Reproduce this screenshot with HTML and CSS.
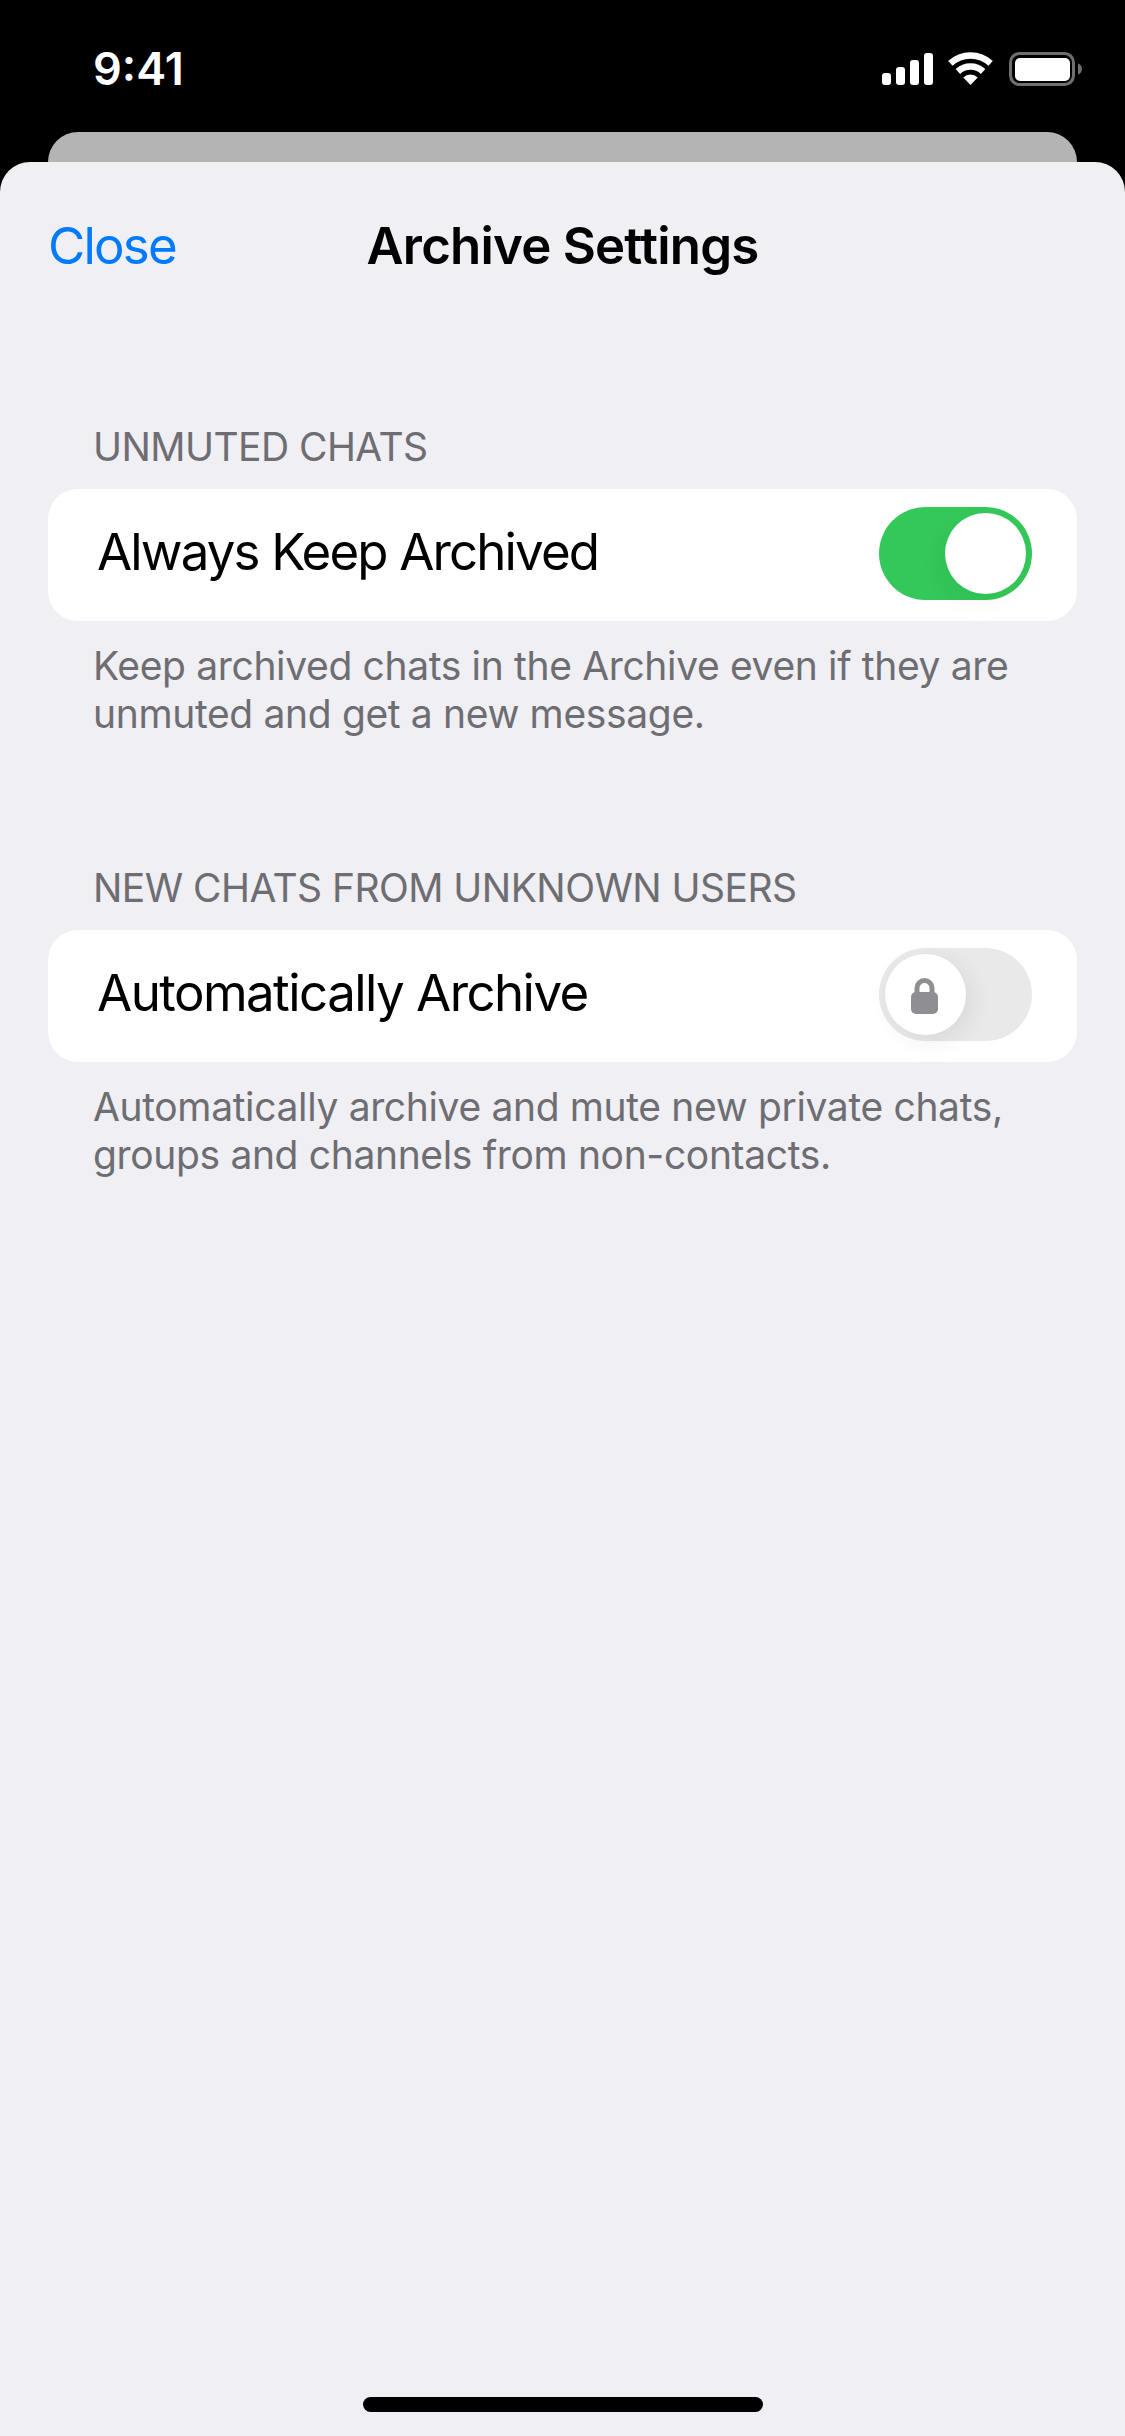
FILE: index.html
```html
<!DOCTYPE html>
<html lang="en">
<head>
<meta charset="utf-8">
<title>Archive Settings</title>
<link rel="stylesheet" href="styles.css">
</head>
<body>
<div class="screen">
  <header class="status">
    <span class="time">9:41</span>
    <div class="status-icons">
      <svg class="signal" viewBox="0 0 51 32"><rect x="0" y="20" width="9" height="12" rx="3"/><rect x="14" y="14" width="9" height="18" rx="3"/><rect x="28" y="7" width="9" height="25" rx="3"/><rect x="42" y="0" width="9" height="32" rx="3"/></svg>
      <svg class="wifi" viewBox="0 0 45 33"><path class="arc" d="M2.4 11.4A29.5 29.5 0 0 1 42.6 11.4"/><path class="arc" d="M9.9 19.5A18.5 18.5 0 0 1 35.1 19.5"/><path class="wedge" d="M22.5 33L15.3 25.6A10.2 10.2 0 0 1 29.7 25.6Z"/></svg>
      <svg class="battery" viewBox="0 0 73 34"><rect class="batt-frame" x="1.5" y="1.5" width="63" height="31" rx="9"/><rect class="batt-fill" x="6" y="6" width="55" height="23" rx="5"/><path class="batt-tip" d="M69 11.5c2.4.8 4 3 4 5.500s-1.600 4.700-4 5.500z"/></svg>
    </div>
  </header>
  <div class="back-card"></div>
  <main class="sheet">
    <nav class="nav">
      <span class="close">Close</span>
      <span class="title">Archive Settings</span>
    </nav>
    <section class="group">
      <h2 class="group-head">UNMUTED CHATS</h2>
      <div class="row">
        <span class="row-label">Always Keep Archived</span>
        <span class="toggle on"><span class="knob"></span></span>
      </div>
      <p class="group-foot">Keep archived chats in the Archive even if they are<br>unmuted and get a new message.</p>
    </section>
    <section class="group">
      <h2 class="group-head">NEW CHATS FROM UNKNOWN USERS</h2>
      <div class="row">
        <span class="row-label row-label-loose">Automatically Archive</span>
        <span class="toggle off"><span class="knob">
          <svg class="lock" viewBox="0 0 27 36"><path class="shackle" d="M6 17V10a7.500 7.500 0 0 1 15 0V17"/><rect class="lock-body" x="0" y="14" width="27" height="22" rx="5"/></svg>
        </span></span>
      </div>
      <p class="group-foot">Automatically archive and mute new private chats,<br>groups and channels from non-contacts.</p>
    </section>
    <div class="home-bar"></div>
  </main>
</div>
</body>
</html>
```
FILE: styles.css
```css
* { box-sizing: border-box; }
html, body { margin: 0; padding: 0; background: #000; }
body { font-family: Inter, "Liberation Sans", sans-serif; }
.screen { width: 1125px; height: 2436px; display: flex; flex-direction: column; overflow: hidden; background: #000; }

.status { height: 132px; flex: none; display: flex; justify-content: space-between; align-items: flex-start; padding: 52px 43px 0 93px; color: #fff; }
.time { font-size: 45px; line-height: 34px; font-weight: 600; }
.status-icons { display: flex; align-items: flex-start; }
.signal { width: 51px; height: 32px; margin-top: 1px; fill: #fff; }
.wifi { width: 45px; height: 33px; margin-left: 15px; }
.arc { fill: none; stroke: #fff; stroke-width: 6.5; }
.wedge { fill: #fff; }
.battery { width: 73px; height: 34px; margin-left: 16px; }
.batt-frame { fill: none; stroke: #6f6f6f; stroke-width: 3; }
.batt-fill { fill: #fff; }
.batt-tip { fill: #6f6f6f; }

.back-card { height: 30px; flex: none; margin: 0 48px; background: #b4b4b4; border-radius: 30px 30px 0 0; }

.sheet { flex: 1; display: flex; flex-direction: column; background: #efeff4; border-radius: 30px 30px 0 0; }
.nav { height: 166px; flex: none; position: relative; display: flex; justify-content: center; padding-top: 54px; }
.close { position: absolute; left: 48px; top: 54px; font-size: 51px; line-height: 60px; letter-spacing: -1.800px; color: #007aff; }
.title { font-size: 51px; line-height: 60px; font-weight: 600; letter-spacing: -0.8px; color: #000; }

.group { margin-bottom: 31px; }
.group-head { margin: 0; padding: 0 48px 18px 93px; font-size: 39px; line-height: 48px; font-weight: 400; letter-spacing: -0.55px; color: #6d6d72; height: 161px; display: flex; align-items: flex-end; }
.row { height: 132px; margin: 0 48px; padding: 0 45px 3px 49px; display: flex; justify-content: space-between; align-items: center; background: #fff; border-radius: 30px; }
.row-label { font-size: 51px; line-height: 60px; letter-spacing: -1.85px; color: #000; margin-bottom: 3px; }
.row-label-loose { letter-spacing: -1.55px; }
.group-foot { margin: 21px 0 0; padding: 0 48px 0 93px; font-size: 39px; line-height: 48px; letter-spacing: -0.35px; color: #6d6d72; }

.toggle { width: 153px; height: 93px; border-radius: 47px; padding: 6px; display: flex; }
.toggle.on { background: #34c759; justify-content: flex-end; }
.toggle.off { background: #e9e9ea; justify-content: flex-start; }
.knob { width: 81px; height: 81px; border-radius: 50%; background: #fff; display: flex; align-items: center; justify-content: center; }
.toggle.on .knob { box-shadow: -6px 9px 24px rgba(0,0,0,.04); }
.toggle.off .knob { box-shadow: 6px 6px 24px rgba(0,0,0,.07); }
.lock { width: 27px; height: 36px; margin-right: 3px; margin-top: 2px; }
.shackle { fill: none; stroke: #8e8e93; stroke-width: 5; }
.lock-body { fill: #8e8e93; }

.home-bar { width: 400px; height: 15px; flex: none; margin: auto auto 24px; background: #000; border-radius: 8px; }
```
